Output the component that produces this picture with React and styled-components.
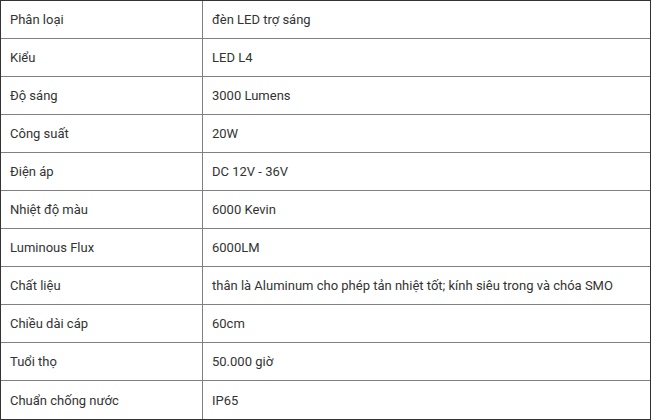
import React from 'react'
import styled, { createGlobalStyle } from 'styled-components'

const specs = [
  ['Phân loại', 'đèn LED trợ sáng'],
  ['Kiểu', 'LED L4'],
  ['Độ sáng', '3000 Lumens'],
  ['Công suất', '20W'],
  ['Điện áp', 'DC 12V - 36V'],
  ['Nhiệt độ màu', '6000 Kevin'],
  ['Luminous Flux', '6000LM'],
  ['Chất liệu', 'thân là Aluminum cho phép tản nhiệt tốt; kính siêu trong và chóa SMO'],
  ['Chiều dài cáp', '60cm'],
  ['Tuổi thọ', '50.000 giờ'],
  ['Chuẩn chống nước', 'IP65'],
]

function App() {
  return (
    <>
      <GlobalStyle />
      <SpecTable>
        <tbody>
          {specs.map(([label, value], i) => (
            <Row key={label}>
              <Label $last={i === specs.length - 1}>{label}</Label>
              <Value $last={i === specs.length - 1}>{value}</Value>
            </Row>
          ))}
        </tbody>
      </SpecTable>
    </>
  )
}

export default App

const GlobalStyle = createGlobalStyle`
    body {
        margin: 0;
        background: #fff;
        font-family: Roboto, 'Liberation Sans', sans-serif;
    }
`

const SpecTable = styled.table`
    width: 651px;
    border-collapse: separate;
    border-spacing: 0;
    border: 1px solid #333;
    table-layout: fixed;
`

const Row = styled.tr`
    height: 38px;
`

const Cell = styled.td`
    padding: 0 9px;
    font-size: 13px;
    color: #333;
    vertical-align: middle;
    border-bottom: ${p => (p.$last ? 'none' : '1px solid #808080')};
    white-space: nowrap;
`

const Label = styled(Cell)`
    width: 183px;
    border-right: 1px solid #808080;
`

const Value = styled(Cell)``
